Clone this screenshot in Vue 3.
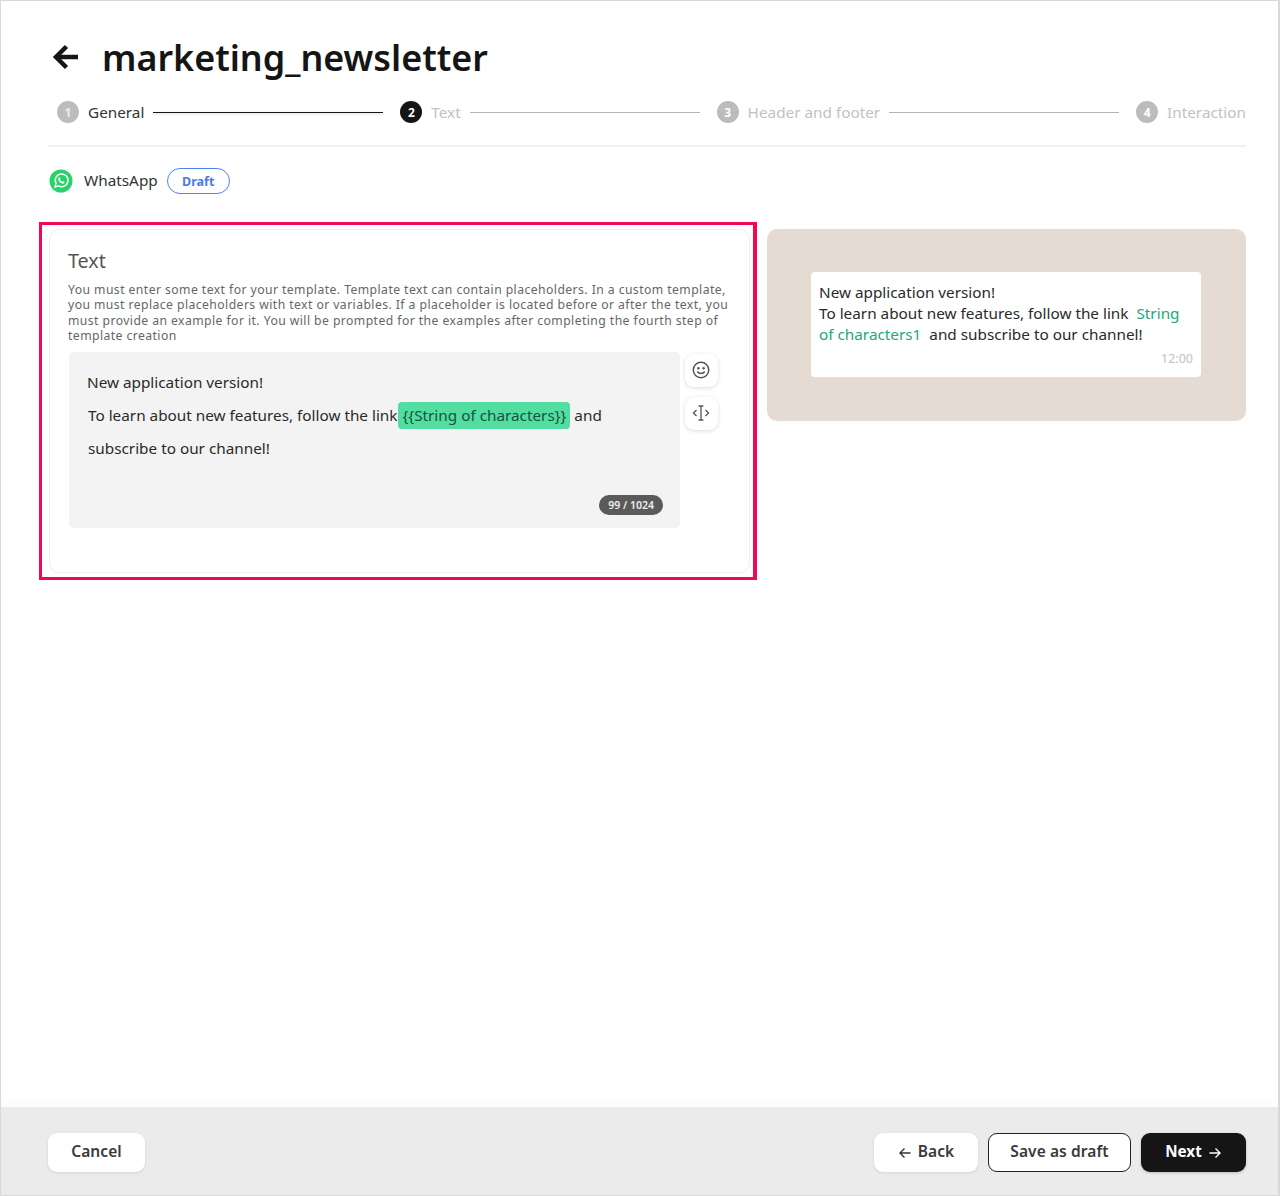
<script setup>
const steps = [
  { n: 1, label: 'General', done: true },
  { n: 2, label: 'Text', current: true },
  { n: 3, label: 'Header and footer' },
  { n: 4, label: 'Interaction' },
]
</script>

<template>
  <div class="page">
    <main class="content">
      <header class="title-row">
        <svg class="back" width="28" height="28" viewBox="0 0 28 28" fill="none" stroke="#151515" stroke-width="4.500" stroke-linejoin="miter">
          <path d="M26 14H4" />
          <path d="M14.500 3.500 4 14l10.500 10.500" />
        </svg>
        <h1>marketing_newsletter</h1>
      </header>

      <nav class="steps">
        <template v-for="(s, i) in steps" :key="s.n">
          <div class="step" :class="{ done: s.done, current: s.current }">
            <span class="num">{{ s.n }}</span>
            <span class="label">{{ s.label }}</span>
          </div>
          <div v-if="i < steps.length - 1" class="line" :class="{ dark: s.done }"></div>
        </template>
      </nav>

      <div class="channel">
        <svg class="wa" width="24" height="24" viewBox="0 0 24 24">
          <circle cx="12" cy="12" r="11.5" fill="#25d366" />
          <path d="M6 18l1-3.6a6.4 6.4 0 1 1 2.5 2.5z" fill="none" stroke="#fff" stroke-width="1.5" stroke-linejoin="round" />
          <path d="M9.9 8.6c.6-.5 1-.3 1.2.3l.3.8c.1.3 0 .5-.4 1 .5.9 1.2 1.6 2.2 2.1.5-.5.7-.6 1-.4l.9.4c.5.3.6.6.2 1.1-.7.8-1.6.8-2.8.3-1.400-.6-2.500-1.700-3-3-.4-1.100-.4-1.900.4-2.600z" fill="#fff" />
        </svg>
        <span class="channel-name">WhatsApp</span>
        <span class="badge">Draft</span>
      </div>

      <div class="columns">
        <section class="card">
          <h2>Text</h2>
          <p class="hint">You must enter some text for your template. Template text can contain placeholders. In a custom template, you must replace placeholders with text or variables. If a placeholder is located before or after the text, you must provide an example for it. You will be prompted for the examples after completing the fourth step of template creation</p>
          <div class="editor-row">
            <div class="editor">
              <div class="editor-text">
                <div class="first">New application version!</div>
                <div>To learn about new features, follow the link<span class="chip">{{ '{' + '{String of characters}' + '}' }}</span> and</div>
                <div>subscribe to our channel!</div>
              </div>
              <span class="counter">99 / 1024</span>
            </div>
            <div class="tools">
              <button class="tool" type="button" aria-label="Emoji">
                <svg width="20" height="20" viewBox="0 0 20 20" fill="none" stroke="#555" stroke-width="1.5">
                  <circle cx="10" cy="10" r="7.700" />
                  <circle cx="7.400" cy="8.200" r="1.200" fill="#555" stroke="none" />
                  <circle cx="12.600" cy="8.200" r="1.200" fill="#555" stroke="none" />
                  <path d="M6.300 11.500c1.700 2.800 5.700 2.800 7.400 0" />
                </svg>
              </button>
              <button class="tool" type="button" aria-label="Placeholder">
                <svg width="20" height="20" viewBox="0 0 20 20" fill="none" stroke="#555" stroke-width="1.300">
                  <path d="M5.500 7 2.500 10l3 3" />
                  <path d="M14.500 7l3 3-3 3" />
                  <path d="M10 3v14M7.600 3h4.800M7.600 17h4.800" />
                </svg>
              </button>
            </div>
          </div>
        </section>

        <aside class="preview">
          <div class="bubble">
            <p>New application version!<br />To learn about new features, follow the link <span class="var">&nbsp;String</span> <span class="var">of characters1&nbsp;</span> and subscribe to our channel!</p>
            <div class="time">12:00</div>
          </div>
        </aside>
      </div>
    </main>

    <footer class="footer">
      <button class="btn white" type="button">Cancel</button>
      <div class="actions">
        <button class="btn white back-btn" type="button">
          <svg width="14" height="14" viewBox="0 0 14 14" fill="none" stroke="#333" stroke-width="1.400"><path d="M12.500 7H2M6.500 2.500 2 7l4.500 4.500" /></svg>
          Back
        </button>
        <button class="btn outline" type="button">Save as draft</button>
        <button class="btn dark" type="button">
          Next
          <svg width="14" height="14" viewBox="0 0 14 14" fill="none" stroke="#fff" stroke-width="1.400"><path d="M1.500 7H12M7.500 2.500 12 7l-4.500 4.500" /></svg>
        </button>
      </div>
    </footer>

    <div class="highlight"></div>
  </div>
</template>

<style>
html, body { margin: 0; background: #fff; }
</style>

<style scoped>
* { box-sizing: border-box; }
.page {
  position: relative;
  width: 1280px;
  height: 1196px;
  display: flex;
  flex-direction: column;
  border: 1px solid #d9d9d9;
  border-width: 1px 2px 1px 1px;
  font-family: "Noto Sans", "Open Sans", sans-serif;
  color: #1c1c1c;
  background: #fff;
}
.content {
  flex: 1;
  padding: 0 32px 0 47px;
}
.title-row {
  display: flex;
  align-items: center;
  height: 50px;
  margin-top: 32px;
  padding-left: 4px;
}
.back { margin-right: 22px; flex: none; margin-top: -2px; }
h1 {
  margin: 0;
  font-size: 35.900px;
  line-height: 50px;
  font-weight: 600;
  color: #151515;
}
.steps {
  display: flex;
  align-items: center;
  height: 40px;
  margin-top: 9px;
  padding-left: 9px;
}
.step { display: flex; align-items: center; gap: 9px; flex: none; }
.num {
  width: 22px;
  height: 22px;
  border-radius: 50%;
  background: #bcbcbc;
  color: #fff;
  font-size: 12px;
  font-weight: 700;
  display: flex;
  align-items: center;
  justify-content: center;
}
.label { font-size: 15.300px; color: #c2c2c2; line-height: 22px; }
.step.done .label { color: #333; }
.step.done .num { color: #eee; }
.step.current .num { background: #151515; }
.line { flex: 1; height: 1px; background: #b5b5b5; margin: 1px 17px 0 9px; }
.line.dark { background: #151515; }
.channel {
  display: flex;
  align-items: center;
  height: 70px;
  margin-top: 13px;
  padding-left: 1px;
  border-top: 2px solid #f1f1f1;
}
.wa { flex: none; margin-right: 11px; }
.channel-name { font-size: 15.300px; line-height: 20px; color: #333; margin-right: 9px; padding-bottom: 2px; }
.badge {
  width: 63px;
  height: 26px;
  border: 1.500px solid #4d82f5;
  border-radius: 13px;
  color: #4a78ea;
  font-size: 12.500px;
  font-weight: 700;
  display: flex;
  align-items: center;
  justify-content: center;
}
.columns {
  display: grid;
  grid-template-columns: 702px 479px;
  column-gap: 17px;
  align-items: start;
  margin-top: 14px;
}
.card {
  height: 344px;
  border: 1px solid #efefef;
  border-radius: 10px;
  padding: 17px 18px 0 18px;
  margin-left: 1px;
}
h2 {
  margin: 0;
  font-size: 19.700px;
  line-height: 28px;
  font-weight: 400;
  color: #555;
}
.hint {
  margin: 7px 0 0;
  font-size: 12.200px;
  line-height: 15.300px;
  letter-spacing: 0.43px;
  color: #666;
  width: 664px;
}
.editor-row { display: flex; gap: 5px; margin-top: 9px; padding-left: 1px; }
.editor {
  position: relative;
  width: 611px;
  height: 176px;
  background: #f3f3f3;
  border-radius: 5px;
  padding: 14px 19px;
}
.editor-text { font-size: 15.300px; line-height: 33px; color: #2a2a2a; white-space: nowrap; }
.editor-text .first { margin-left: -1px; }
.chip {
  display: inline-block;
  height: 27px;
  line-height: 26px;
  padding: 0 4px 0 5px;
  background: #52dea0;
  border-radius: 4px;
  color: #17543a;
}
.counter {
  position: absolute;
  right: 17px;
  bottom: 13px;
  height: 20px;
  line-height: 20px;
  padding: 0 9px;
  border-radius: 10px;
  background: #5a5a5a;
  color: #eee;
  font-size: 10.500px;
  font-weight: 600;
}
.tools { display: flex; flex-direction: column; gap: 10px; padding-top: 2px; }
.tool {
  width: 33px;
  height: 33px;
  padding: 0 1px 1px 0;
  border: 0;
  border-radius: 9px;
  background: #fff;
  box-shadow: 0 1px 4px rgba(0, 0, 0, 0.14);
  display: flex;
  align-items: center;
  justify-content: center;
}
.preview {
  height: 192px;
  border-radius: 10px;
  background: #e6dbd2;
  padding: 43px 45px 0 44px;
}
.bubble {
  height: 105px;
  background: #fff;
  border-radius: 4px;
  padding: 10px 8px 0;
}
.bubble p {
  margin: 0;
  font-size: 15.300px;
  line-height: 21px;
  color: #2a2a2a;
}
.var { color: #1fa67a; }
.time { text-align: right; font-size: 12.500px; line-height: 18px; color: #c2c2c2; margin-top: 5px; }
.footer {
  height: 88px;
  flex: none;
  background: #ebebeb;
  box-shadow: 0 -4px 12px rgba(0, 0, 0, 0.025);
  display: flex;
  justify-content: space-between;
  align-items: flex-start;
  padding: 26px 32px 0 47px;
}
.actions { display: flex; gap: 10px; }
.btn {
  height: 39px;
  border: 0;
  border-radius: 9px;
  font-family: inherit;
  font-size: 15.500px;
  letter-spacing: 0.1px;
  font-weight: 600;
  color: #3a3a3a;
  display: flex;
  align-items: center;
  justify-content: center;
  gap: 6px;
  padding: 0 0 3px;
}
.btn svg { margin-top: 3px; }
.white { background: #fff; width: 97px; box-shadow: 0 1px 3px rgba(0, 0, 0, 0.1); }
.back-btn { width: 104px; }
.outline { width: 143px; background: #fff; border: 1.500px solid #222; }
.dark { width: 105px; background: #151515; color: #fff; font-weight: 700; letter-spacing: 0; font-size: 15.200px; box-shadow: 0 1px 3px rgba(0, 0, 0, 0.2); }
.highlight {
  position: absolute;
  left: 38px;
  top: 221px;
  width: 718px;
  height: 358px;
  border: 3px solid #f0094f;
  border-right-width: 4px;
  pointer-events: none;
}
</style>
